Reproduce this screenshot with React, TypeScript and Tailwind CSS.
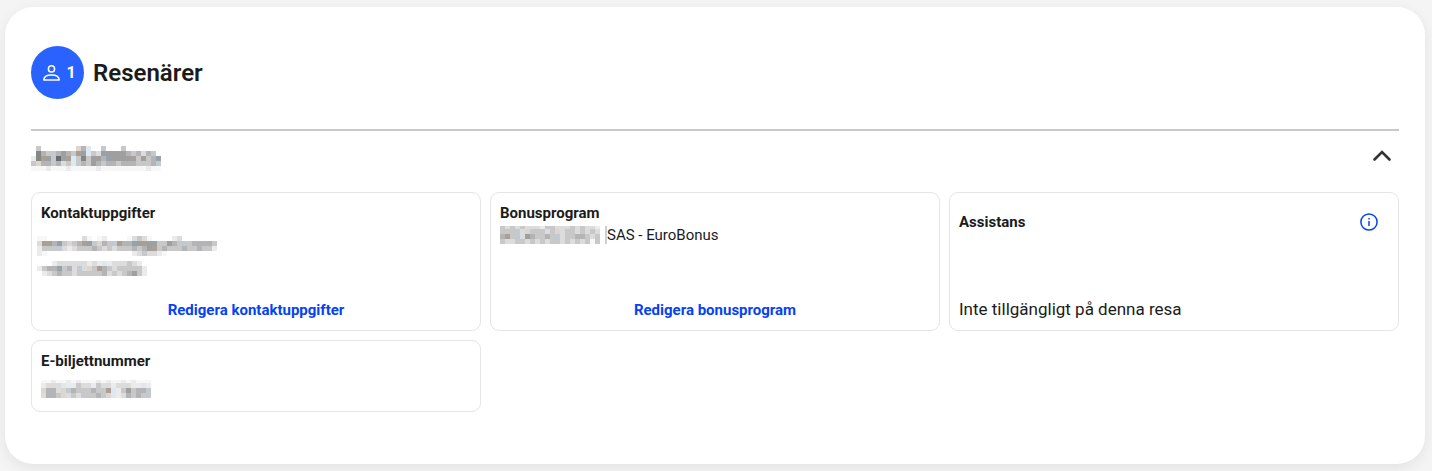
import type { ReactNode } from 'react';

const CELL = 5;

// one letter per mosaic cell, a dot is an empty cell
const TONES: Record<string, string> = {
  a: '#f7f7f7',
  b: '#ebebeb',
  c: '#dcdcdc',
  d: '#c8c8c8',
  e: '#b4b4b6',
  f: '#9f9f9f',
  g: '#858686',
  h: '#6a6b6c',
  i: '#ddd6ce',
  j: '#a89f97',
  k: '#dfe7ef',
  l: '#c3c9d1',
  m: '#98a0a8',
};

const NAME = [
  '.d.......iek..l...d.......',
  '.gedlefedjmkdcmffffedeced.',
  'bgjflhmjkdgdffemffffjdfdem',
  'dieedecdkdedfedeedeeedddel',
  'aaabaaabaaaaabaaaaaaaaabaa',
];

const EMAIL = [
  'aa.......ca.ab....acdca....bc.......',
  'cjjemdidejmdiedljeemfjfmddfedldeeeed',
  'bdddlcbcdddedcdcdddedefjdedddeddeddb',
  'ba.................bcdccba..........',
];

const PHONE = [
  '...bccccccbcbkbcccdcb.',
  'bdeemdeclcidjedcdddddb',
  '.bcdeddclddddecdcdefdb',
];

const BONUS_NUMBER = [
  'dcdcdcccbddcccdcdccb',
  'dddlcidddcdicddcdcdc',
  'ejdlcfeddedlcddeedcd',
  'dccddcdcdcddcdcdcdad',
];

const TICKET = [
  'aabaababaaababaababaaa',
  'bccckbbdccbdccbcccbbkb',
  'ieeciledddeddjkbdfdeel',
  'ceedicdclddedikbcededl',
];

type MosaicProps = {
  rows: string[];
  label: string;
  // pixels cut off the first row
  trim?: number;
  className?: string;
};

function Mosaic({ rows, label, trim = 0, className = '' }: MosaicProps) {
  const w = rows[0].length * CELL;
  const h = rows.length * CELL - trim;
  return (
    <svg
      role="img"
      aria-label={label}
      width={w}
      height={h}
      viewBox={`0 ${trim} ${w} ${h}`}
      shapeRendering="crispEdges"
      className={'shrink-0 ' + className}
    >
      {rows.map((row, y) =>
        [...row].map((tone, x) =>
          tone === '.' ? null : (
            <rect key={`${x}-${y}`} x={x * CELL} y={y * CELL} width={CELL} height={CELL} fill={TONES[tone]} />
          ),
        ),
      )}
    </svg>
  );
}

function PersonIcon() {
  return (
    <svg aria-hidden width="17" height="16" viewBox="0 0 17 16" fill="none" stroke="currentColor" strokeWidth="1.5">
      <circle cx="8.5" cy="3.9" r="3.1" />
      <path d="M.8 15c0-3.4 3.6-5 7.7-5s7.7 1.6 7.7 5z" strokeLinejoin="round" />
    </svg>
  );
}

function InfoIcon() {
  return (
    <svg aria-hidden width="18" height="18" viewBox="0 0 18 18" fill="none" stroke="currentColor" strokeWidth="1.5">
      <circle cx="9" cy="9" r="8.1" />
      <path d="M9 8v5" />
      <path d="M9 5v1.6" />
    </svg>
  );
}

function Card({ title, className = '', children }: { title: string; className?: string; children: ReactNode }) {
  return (
    <article className={'flex flex-col rounded-[9px] border border-[#e5e5e5] px-[9px] pt-[10px] ' + className}>
      <h3 className="text-[15px] leading-5 font-bold">{title}</h3>
      {children}
    </article>
  );
}

function EditLink({ children }: { children: ReactNode }) {
  return (
    <a href="#" className="mt-auto self-center text-[15px] leading-5 font-bold text-[#0542f5] hover:underline">
      {children}
    </a>
  );
}

export default function App() {
  return (
    <div className="min-h-screen bg-[#f4f4f4] pt-[7px] pr-[7px] pb-[7px] pl-[5px] font-['Roboto',sans-serif] text-[#1b1b1b]">
      <main className="rounded-[28px] bg-white px-[26px] pt-[39px] pb-[52px] shadow-[0_4px_14px_rgba(0,0,0,0.07)]">
        <header className="flex items-center gap-[9px]">
          <span className="flex size-[53px] items-center justify-center gap-[6px] rounded-full bg-[#2962ff] pl-1 text-white">
            <PersonIcon />
            <span className="text-base leading-5 font-bold">1</span>
          </span>
          <h1 className="text-2xl font-semibold">Resenärer</h1>
        </header>

        <section className="mt-[30px] border-t-2 border-[#c9c9c9]">
          <h2>
            <button type="button" aria-expanded="true" className="flex w-full items-start justify-between pt-[13px] pr-[5px]">
              <Mosaic rows={NAME} label="Dolt namn" className="mt-[2px]" />
              <svg aria-hidden width="24" height="24" viewBox="0 0 24 24" fill="none" stroke="#333" strokeWidth="2.6" strokeLinecap="round">
                <path d="M4.5 15.5 12 8l7.5 7.5" />
              </svg>
            </button>
          </h2>

          <div className="mt-[21px] grid gap-[9px] md:grid-cols-3">
            <Card title="Kontaktuppgifter" className="pb-[10px]">
              <Mosaic rows={EMAIL} label="Dold e-post" className="mt-[13px] -ml-1" />
              <Mosaic rows={PHONE} label="Dolt telefonnummer" className="mt-[5px] mb-6 -ml-1" />
              <EditLink>Redigera kontaktuppgifter</EditLink>
            </Card>

            <Card title="Bonusprogram" className="pb-[10px]">
              <p className="flex h-6 items-center text-[15px]">
                <Mosaic rows={BONUS_NUMBER} label="Dolt medlemsnummer" trim={2} />
                <span className="ml-[5px] border-l-2 border-[#cfcfcf] leading-[18px]">SAS - EuroBonus</span>
              </p>
              <EditLink>Redigera bonusprogram</EditLink>
            </Card>

            <article className="flex flex-col rounded-[9px] border border-[#e5e5e5] px-[9px] pt-[19px] pb-[11px]">
              <div className="flex items-center justify-between pr-[11px]">
                <h3 className="text-[15px] leading-5 font-bold">Assistans</h3>
                <button type="button" aria-label="Mer om assistans" className="text-[#0542f5]">
                  <InfoIcon />
                </button>
              </div>
              <p className="mt-auto text-[17px] leading-5">Inte tillgängligt på denna resa</p>
            </article>

            <Card title="E-biljettnummer" className="pb-[13px]">
              <Mosaic rows={TICKET} label="Dolt biljettnummer" trim={2} className="mt-[9px]" />
            </Card>
          </div>
        </section>
      </main>
    </div>
  );
}
